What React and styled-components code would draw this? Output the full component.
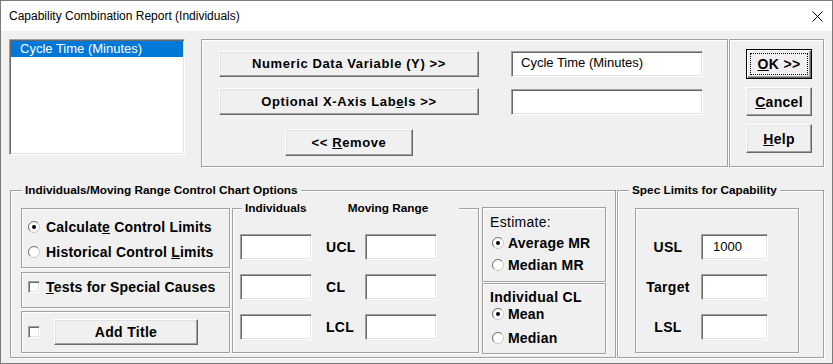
import React from 'react';
import styled, { createGlobalStyle, css } from 'styled-components';

const GlobalStyle = createGlobalStyle`
  html, body {
    margin: 0;
    padding: 0;
    background: #f0f0f0;
  }
  body {
    font-family: "Liberation Sans", Arial, sans-serif;
    color: #000;
  }
  * {
    box-sizing: border-box;
  }
`;

const etched = css`
  border: 1px solid #a0a0a0;
  box-shadow: 1px 1px 0 #fff, inset 1px 1px 0 #fff;
`;

const sunken = css`
  border: 1px solid;
  border-color: #a0a0a0 #fff #fff #a0a0a0;
  box-shadow: inset 1px 1px 0 #696969, inset -1px -1px 0 #e3e3e3;
  background: #fff;
`;

const Window = styled.div`
  width: 833px;
  height: 364px;
  border: 1px solid #7a7a7a;
  background: #f0f0f0;
  display: flex;
  flex-direction: column;
`;

const TitleBar = styled.div`
  height: 30px;
  flex: none;
  background: #fff;
  display: flex;
  align-items: center;
  justify-content: space-between;
  padding: 0 9px 0 8px;
`;

const Caption = styled.span`
  font-size: 12px;
  color: #000;
`;

const Body = styled.div`
  padding: 8px 8px 0 8px;
`;

const TopRow = styled.div`
  display: flex;
  align-items: flex-start;
  height: 128px;
`;

const ListBox = styled.div`
  ${sunken};
  width: 176px;
  height: 116px;
  padding: 1px;
  margin-right: 16px;
`;

const ListItem = styled.div`
  height: 16px;
  line-height: 16px;
  padding-left: 9px;
  font-size: 13px;
  background: ${p => (p.$selected ? '#0078d7' : 'transparent')};
  color: ${p => (p.$selected ? '#fff' : '#000')};
`;

const Frame = styled.div`
  ${etched};
  width: ${p => p.$w}px;
  height: 128px;
  margin-left: ${p => p.$ml || 0}px;
  padding: ${p => p.$pad};
`;

const SourceGrid = styled.div`
  display: grid;
  grid-template-columns: 260px 192px;
  grid-template-rows: 27px 27px auto;
  column-gap: 32px;
  row-gap: 11px;
  align-items: center;
`;

const ActionStack = styled.div`
  display: flex;
  flex-direction: column;
  gap: 8px;
`;

const Button = styled.button`
  width: ${p => p.$w}px;
  height: ${p => p.$h}px;
  padding: 0;
  font-family: "Liberation Sans", Arial, sans-serif;
  font-weight: bold;
  font-size: ${p => p.$fs || 13}px;
  letter-spacing: ${p => (p.$fs ? 0.3 : 0.6)}px;
  color: #000;
  background: #f0f0f0;
  border: 1px solid;
  border-color: #fff #696969 #696969 #fff;
  box-shadow: inset -1px -1px 0 #a0a0a0, inset 1px 1px 0 #e3e3e3;
  justify-self: ${p => p.$center ? 'center' : 'start'};
  margin-top: ${p => p.$mt || 0}px;
  ${p => p.$default && css`
    position: relative;
    border-color: #000;
    box-shadow: inset 1px 1px 0 #fff, inset -1px -1px 0 #696969, inset -2px -2px 0 #a0a0a0;
    &::after {
      content: '';
      position: absolute;
      inset: 3px;
      border: 1px dotted #000;
    }
  `}
`;

const Field = styled.input`
  ${sunken};
  width: ${p => p.$w}px;
  height: 26px;
  padding: 0 0 2px ${p => p.$pl ?? 9}px;
  font-family: "Liberation Sans", Arial, sans-serif;
  font-size: 13px;
  color: #000;
  outline: none;
`;

const BottomRow = styled.div`
  display: flex;
  align-items: stretch;
  gap: 1px;
  margin-top: 16px;
  padding-left: 1px;
`;

const Group = styled.fieldset`
  ${etched};
  margin: 0 0 0 ${p => p.$ml || 0}px;
  padding: 0;
  min-width: 0;
  width: ${p => p.$w}px;
  ${p => p.$h && css`height: ${p.$h}px;`}
`;

const Legend = styled.legend`
  margin-left: ${p => p.$ml}px;
  padding: 0 ${p => p.$pr || 3}px 0 3px;
  font-weight: bold;
  font-size: 11.8px;
  line-height: 14px;
  background: #f0f0f0;
  white-space: pre;
`;

const LegendPart = styled.span`
  margin-left: ${p => p.$ml || 0}px;
`;

const OptionsRow = styled.div`
  display: flex;
  align-items: flex-start;
  padding: 4px 9px 3px 10px;
`;

const Column = styled.div`
  display: flex;
  flex-direction: column;
  width: ${p => p.$w}px;
  margin-top: ${p => p.$mt}px;
  margin-left: ${p => p.$ml || 0}px;
  gap: ${p => p.$gap || 0}px;
`;

const Panel = styled.div`
  ${etched};
  height: ${p => p.$h}px;
  margin-top: ${p => p.$mt || 0}px;
  padding: ${p => p.$pad};
  display: flex;
  flex-direction: ${p => p.$row ? 'row' : 'column'};
  align-items: ${p => p.$row ? 'center' : 'stretch'};
  gap: ${p => p.$gap || 0}px;
`;

const OptionRow = styled.label`
  display: flex;
  align-items: center;
  height: 16px;
  gap: ${p => p.$gap ?? 6}px;
  margin-top: ${p => p.$mt || 0}px;
  margin-left: ${p => p.$ml || 0}px;
  font-weight: bold;
  font-size: 14px;
  letter-spacing: 0.2px;
  white-space: nowrap;
`;

const PlainText = styled.div`
  height: 16px;
  line-height: 16px;
  font-size: 14px;
  font-weight: ${p => p.$bold ? 'bold' : 'normal'};
  letter-spacing: 0.3px;
  margin-top: ${p => p.$mt || 0}px;
`;

const CheckBox = styled.span`
  ${sunken};
  display: inline-block;
  flex: none;
  width: 12px;
  height: 12px;
`;

const LimitsGrid = styled.div`
  display: grid;
  grid-template-columns: 72px 53px 72px;
  grid-auto-rows: 26px;
  row-gap: 14px;
  align-items: center;
  padding: 19px 0 0 7px;
`;

const LimitLabel = styled.span`
  font-weight: bold;
  font-size: 14px;
  letter-spacing: 0.3px;
  padding-left: ${p => p.$pl || 0}px;
  text-align: ${p => p.$center ? 'center' : 'left'};
`;

const SpecWrap = styled.div`
  padding: 11px 0 4px 17px;
`;

const SpecPanel = styled.div`
  ${etched};
  width: 164px;
  height: 145px;
  padding: 25px 0 0 4px;
  display: grid;
  grid-template-columns: 56px 67px;
  grid-auto-rows: 26px;
  column-gap: 5px;
  row-gap: 14px;
  align-items: center;
  align-content: start;
`;

const Radio = ({ checked }) => (
  <svg width="12" height="12" viewBox="0 0 12 12">
    <circle cx="6" cy="6" r="5.5" fill="#fff" stroke="#c8c8c8" />
    <path d="M2.1 9.9 A5.5 5.5 0 0 1 9.9 2.1" fill="none" stroke="#7a7a7a" />
    {checked && <circle cx="6" cy="6" r="2" fill="#000" />}
  </svg>
);

const CloseGlyph = () => (
  <svg width="11" height="11" viewBox="0 0 11 11">
    <path d="M0.5 0.5 L10.5 10.5 M10.5 0.5 L0.5 10.5" stroke="#000" strokeWidth="1" />
  </svg>
);

export default function App() {
  return (
    <>
      <GlobalStyle />
      <Window>
        <TitleBar>
          <Caption>Capability Combination Report (Individuals)</Caption>
          <CloseGlyph />
        </TitleBar>
        <Body>
          <TopRow>
            <ListBox>
              <ListItem $selected>Cycle Time (Minutes)</ListItem>
            </ListBox>
            <Frame $w={527} $pad="10px 0 0 17px">
              <SourceGrid>
                <Button $w={260} $h={26}>Numeric Data Variable (Y) &gt;&gt;</Button>
                <Field $w={192} readOnly defaultValue="Cycle Time (Minutes)" />
                <Button $w={260} $h={27}>Optional X-Axis Lab<u>e</u>ls &gt;&gt;</Button>
                <Field $w={192} readOnly defaultValue="" />
                <Button $w={128} $h={27} $center $mt={3}>&lt;&lt; <u>R</u>emove</Button>
              </SourceGrid>
            </Frame>
            <Frame $w={95} $ml={1} $pad="9px 0 0 16px">
              <ActionStack>
                <Button $w={66} $h={30} $fs={14} $default><u>O</u>K &gt;&gt;</Button>
                <Button $w={66} $h={29} $fs={14}><u>C</u>ancel</Button>
                <Button $w={66} $h={29} $fs={14}><u>H</u>elp</Button>
              </ActionStack>
            </Frame>
          </TopRow>

          <BottomRow>
            <Group $w={606}>
              <Legend $ml={11}>Individuals/Moving Range Control Chart Options</Legend>
              <OptionsRow>
                <Column $w={209} $mt={7}>
                  <Panel $h={60} $pad="10px 0 0 6px" $gap={9}>
                    <OptionRow><Radio checked /><span>Calculat<u>e</u> Control Limits</span></OptionRow>
                    <OptionRow><Radio /><span>Historical Control <u>L</u>imits</span></OptionRow>
                  </Panel>
                  <Panel $h={36} $mt={4} $pad="6px 0 0 6px">
                    <OptionRow><CheckBox /><span><u>T</u>ests for Special Causes</span></OptionRow>
                  </Panel>
                  <Panel $h={42} $mt={3} $pad="0 0 0 6px" $row $gap={14}>
                    <CheckBox />
                    <Button $w={144} $h={26} $fs={14}>Add Title</Button>
                  </Panel>
                </Column>

                <Group $w={247} $h={152} $ml={2}>
                  <Legend $ml={9} $pr={31}>
                    <LegendPart>Individuals</LegendPart>
                    <LegendPart $ml={41}>Moving Range</LegendPart>
                  </Legend>
                  <LimitsGrid>
                    <Field $w={72} readOnly defaultValue="" />
                    <LimitLabel $pl={14}>UCL</LimitLabel>
                    <Field $w={72} readOnly defaultValue="" />
                    <Field $w={72} readOnly defaultValue="" />
                    <LimitLabel $pl={14}>CL</LimitLabel>
                    <Field $w={72} readOnly defaultValue="" />
                    <Field $w={72} readOnly defaultValue="" />
                    <LimitLabel $pl={14}>LCL</LimitLabel>
                    <Field $w={72} readOnly defaultValue="" />
                  </LimitsGrid>
                </Group>

                <Column $w={124} $mt={6} $ml={3} $gap={1}>
                  <Panel $h={75} $pad="6px 0 0 7px">
                    <PlainText>Estimate:</PlainText>
                    <OptionRow $mt={5} $ml={2} $gap={4}><Radio checked /><span>Average MR</span></OptionRow>
                    <OptionRow $mt={6} $ml={2} $gap={4}><Radio /><span>Median MR</span></OptionRow>
                  </Panel>
                  <Panel $h={71} $pad="5px 0 0 7px">
                    <PlainText $bold>Individual CL</PlainText>
                    <OptionRow $mt={1} $ml={2} $gap={4}><Radio checked /><span>Mean</span></OptionRow>
                    <OptionRow $mt={8} $ml={2} $gap={4}><Radio /><span>Median</span></OptionRow>
                  </Panel>
                </Column>
              </OptionsRow>
            </Group>

            <Group $w={207}>
              <Legend $ml={11}>Spec Limits for Capability</Legend>
              <SpecWrap>
                <SpecPanel>
                  <LimitLabel $center>USL</LimitLabel>
                  <Field $w={67} $pl={11} readOnly defaultValue="1000" />
                  <LimitLabel $center>Target</LimitLabel>
                  <Field $w={67} readOnly defaultValue="" />
                  <LimitLabel $center>LSL</LimitLabel>
                  <Field $w={67} readOnly defaultValue="" />
                </SpecPanel>
              </SpecWrap>
            </Group>
          </BottomRow>
        </Body>
      </Window>
    </>
  );
}
